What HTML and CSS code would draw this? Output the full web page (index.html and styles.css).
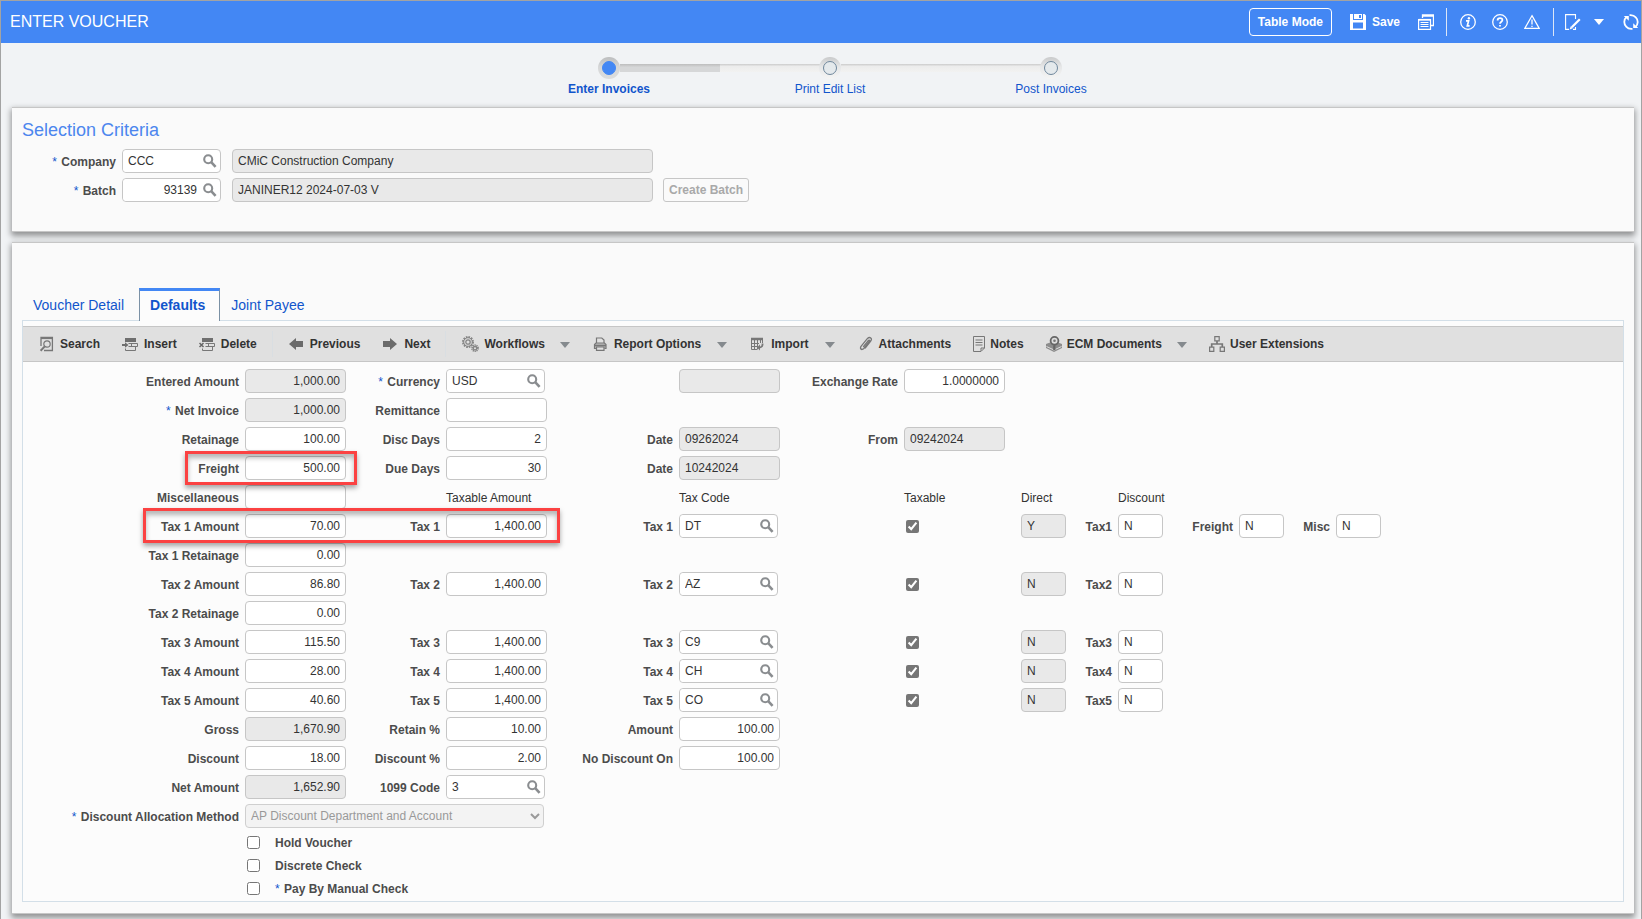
FILE: index.html
```html
<!DOCTYPE html>
<html lang="en">
<head>
<meta charset="utf-8">
<title>Enter Voucher</title>
<link rel="stylesheet" href="styles.css">
</head>
<body>
<svg class="defs" width="0" height="0" aria-hidden="true">
  <symbol id="mag" viewBox="0 0 14 14"><circle cx="5.2" cy="5.2" r="4" fill="none" stroke="#8a8d90" stroke-width="2.1"/><path d="M8.2 8.2L12.6 12.8" stroke="#8a8d90" stroke-width="2.6"/></symbol>
</svg>
<header class="topbar">
  <h1>ENTER VOUCHER</h1>
  <button class="mode">Table Mode</button>
  <button class="save"><svg width="16" height="16" viewBox="0 0 16 16"><path fill="#fff" fill-rule="evenodd" d="M0 0H3V6H13V0H14.5L16 1.5V16H0ZM3 8.5V14.5H13V8.5Z"/><path fill="#fff" d="M4 0H12V5H4Z"/><path fill="#4387f4" d="M9 1H11V4H9Z"/></svg>Save</button>
  <button class="pages" aria-label="Copy"><svg width="16" height="16" viewBox="0 0 16 16" fill="none" stroke="#fff"><path d="M4.5 4V1H15.5V11.5H13M4.5 2H15.5" stroke-width="1.3"/><path d="M.6 5.5H12.5V15.4H.6Z" stroke-width="1.2"/><path d="M.6 5.8H12.5" stroke-width="1.8"/><path d="M2.5 8.5H10.5M2.5 10.5H10.5M2.5 12.5H10.5"/></svg></button>
  <span class="bar"></span>
  <button aria-label="Info"><svg width="16" height="16" viewBox="0 0 16 16"><circle cx="8" cy="8" r="7.3" fill="none" stroke="#fff" stroke-width="1.3"/><path fill="none" stroke="#fff" stroke-width="1.7" d="M6 6.9H8.6L7.3 11.8H9.6"/><circle cx="8.9" cy="4.2" r="1.2" fill="#fff"/></svg></button>
  <button aria-label="Help"><svg width="16" height="16" viewBox="0 0 16 16" fill="none" stroke="#fff"><circle cx="8" cy="8" r="7.3" stroke-width="1.3"/><path stroke-width="1.8" d="M5.6 6.4C5.6 3.3 10.5 3.4 10.4 6.1C10.4 7.8 8.1 7.6 8 9.7M8 10.9V12.6"/></svg></button>
  <button class="warn" aria-label="Warnings"><svg width="16" height="16" viewBox="0 0 16 16" fill="none" stroke="#fff"><path stroke-width="1.2" d="M8 1.6L15.2 14.4H.8Z"/><path stroke-width="1.3" d="M8 5.5V10.6M8 11.7V13"/></svg></button>
  <span class="bar"></span>
  <button class="edit" aria-label="Edit"><svg width="16" height="16" viewBox="0 0 16 16" fill="none" stroke="#fff"><path d="M10.5 5V.6H.6V15.4H4" stroke-width="1.1"/><path d="M10.5 13V15.4H8" stroke-width="1.1"/><path d="M14.8 5.2L6.8 13.2" stroke-width="2.2"/><path fill="#fff" stroke="none" d="M5.8 12.2L7.8 14.2L4.6 15.6Z"/></svg></button>
  <button class="drop" aria-label="More"><svg width="10" height="6" viewBox="0 0 10 6"><path fill="#fff" d="M0 0H10L5 6Z"/></svg></button>
  <button aria-label="Refresh"><svg width="16" height="16" viewBox="0 0 16 16"><path fill="none" stroke="#fff" stroke-width="1.8" d="M3.6 2.900A6.700 6.700 0 0 0 3.200 12.600Q5.500 15.300 9.500 14.800M12.400 13.100A6.700 6.700 0 0 0 12.800 3.400Q10.500 .7 6.500 1.200"/><path fill="#fff" d="M.8 2H5.800V6.800ZM15.200 14H10.200V9.200Z"/></svg></button>
</header>

<nav class="train">
  <a href="#" class="step on"><span class="dot"></span>Enter Invoices</a>
  <a href="#" class="step"><span class="dot"></span>Print Edit List</a>
  <a href="#" class="step"><span class="dot"></span>Post Invoices</a>
</nav>

<section class="panel criteria">
  <h2>Selection Criteria</h2>
  <div class="crit">
    <label for="company"><i>*</i> Company</label>
    <span class="lookup"><input id="company" value="CCC"><button aria-label="Find company"><svg><use href="#mag"/></svg></button></span>
    <input class="wide" value="CMiC Construction Company" aria-label="Company name" disabled>
  </div>
  <div class="crit">
    <label for="batch"><i>*</i> Batch</label>
    <span class="lookup"><input id="batch" class="num" value="93139"><button aria-label="Find batch"><svg><use href="#mag"/></svg></button></span>
    <input class="wide" value="JANINER12 2024-07-03 V" aria-label="Batch name" disabled>
    <button class="create" disabled>Create Batch</button>
  </div>
</section>

<section class="panel detail">
  <nav class="tabs"><a href="#">Voucher Detail</a><a href="#" class="active">Defaults</a><a href="#">Joint Payee</a></nav>
  <div class="sheet">
    <div class="toolbar">
      <button><svg width="16" height="16" viewBox="0 0 16 16" fill="none" stroke="#777"><path d="M3 10V1.5H14.4V14.5H6" stroke-width="1.3"/><path d="M3 2.2H14.4" stroke-width="1.8"/><circle cx="9" cy="8" r="3.2" stroke-width="1.2"/><path d="M6.8 10.4L2.6 14.8" stroke-width="2"/></svg>Search</button>
      <button><svg width="16" height="16" viewBox="0 0 16 16"><path fill="#6f6f6f" d="M3 2H14V6H3ZM0 8H3V6.2L6.5 9L3 11.800V10H0Z"/><path fill="none" stroke="#777" d="M6.500 7.500H15.500V10.500H6.500M3.500 12.500V14.500H13.500V11M9.500 7.500V10.500"/></svg>Insert</button>
      <button><svg width="16" height="16" viewBox="0 0 16 16"><path fill="#6f6f6f" d="M3 2H14V6H3Z"/><path fill="none" stroke="#777" d="M6.500 7.500H15.500V10.500H6.500M3.500 12.500V14.500H13.500V11M9.500 7.500V10.500"/><path stroke="#666" stroke-width="1.500" d="M.5 7L4.500 11M4.500 7L.5 11"/></svg>Delete</button>
      <span class="rule"></span>
      <button><svg width="16" height="16" viewBox="0 0 16 16"><path fill="#6b6b6b" d="M1 8L8 2V5H15V11H8V14Z"/></svg>Previous</button>
      <button><svg width="16" height="16" viewBox="0 0 16 16"><path fill="#6b6b6b" d="M15 8L8 2V5H1V11H8V14Z"/></svg>Next</button>
      <span class="rule"></span>
      <button class="tight"><svg width="18" height="16" viewBox="0 0 18 16" fill="none" stroke="#858585"><circle cx="7" cy="6" r="5" stroke-width="2" stroke-dasharray="1.600 1"/><circle cx="7" cy="6" r="4.300"/><circle cx="7" cy="6" r="2.200" stroke-width="1.300"/><circle cx="14" cy="12.200" r="3" stroke-width="1.800" stroke-dasharray="1.200 .7"/><circle cx="14" cy="12.200" r="1.700" stroke-width="1.300"/></svg>Workflows<b class="caret"></b></button>
      <button><svg width="16" height="16" viewBox="0 0 16 16" fill="none" stroke="#777" stroke-width="1.200"><path d="M4.500 7V2H9.800L12 4V7"/><path fill="#bbb" d="M4 12.500H2.500V8.500L4 7H12.500L14 8.500V12.500H12.500"/><path stroke-width="1.500" d="M2.500 9.500H14"/><path fill="#e0e0e0" d="M4.500 11H12V14.400H4.500Z"/></svg>Report Options<b class="caret"></b></button>
      <button><svg width="16" height="16" viewBox="0 0 16 16" fill="none" stroke="#777"><path d="M8 13.500H2.500V2.500H13.500V7M2.500 7.500H10M2.500 10.500H8M5.500 4V13.500M8.500 4V13.500M11.500 4V7"/><path stroke-width="2.500" d="M2 3H14"/><path stroke-width="1.800" d="M13.500 7.500Q14 11.500 9.800 11.500"/><path fill="#777" stroke="none" d="M8 11.500L11 8.500V14.500Z"/></svg>Import<b class="caret"></b></button>
      <button><svg width="16" height="16" viewBox="0 0 16 16" fill="none" stroke="#777" stroke-width="1.300"><path d="M6.200 10.800L11.200 4.600Q12.300 3.600 12.700 4.800L6.800 12.500Q5 14.300 3.700 12.800Q3.100 11.700 4.200 10.200L10.500 2.400Q12.300 .8 14 2.200Q15 3.400 13.700 5.100L8 12.300"/></svg>Attachments</button>
      <button class="tight"><svg width="12" height="16" viewBox="0 0 12 16" fill="none" stroke="#777"><path d="M.5.5H11.500V12L8 15.500H.5ZM8 15V12H11.500M2.500 4H9.500M2.500 6.500H9.500M2.500 9H9.500"/></svg>Notes</button>
      <button class="tight"><svg width="16" height="16" viewBox="0 0 16 16"><path fill="#8c8c8c" d="M0 8L4 6.500L8 10L12 6.500L16 8V12L8 16L0 12Z"/><path stroke="#ddd" fill="none" d="M.5 10.500L8 14L15.500 10.500"/><circle cx="8.500" cy="4.800" r="3.900" fill="#ddd" stroke="#666" stroke-width="1.800"/><circle cx="8.500" cy="4.800" r="1.300" fill="#777"/><path stroke="#666" stroke-width="2.200" d="M8.300 9V14"/></svg>ECM Documents<b class="caret"></b></button>
      <button class="tight"><svg width="16" height="16" viewBox="0 0 16 16" fill="none" stroke="#777"><path stroke-width="1.200" d="M5.800.6H10.200V4.800H5.800ZM.6 11.200H4.800V15.400H.6ZM11.200 11.200H15.400V15.400H11.200Z"/><path stroke-width="1.700" d="M8 5V8M2.700 11V8H13.300V11"/></svg>User Extensions</button>
    </div>
    <form class="form">
      <div class="row">
        <label class="l1" for="a1">Entered Amount</label><input class="f1 num" id="a1" value="1,000.00" disabled>
        <label class="l2" for="b1"><i>*</i> Currency</label><span class="lookup f2"><input id="b1" value="USD"><button type="button" aria-label="Find"><svg><use href="#mag"/></svg></button></span>
        <input class="f3" aria-label="Currency name" disabled>
        <label class="l4" for="d1">Exchange Rate</label><input class="f4 num" id="d1" value="1.0000000">
      </div>
      <div class="row">
        <label class="l1" for="a2"><i>*</i> Net Invoice</label><input class="f1 num" id="a2" value="1,000.00" disabled>
        <label class="l2" for="b2">Remittance</label><input class="f2" id="b2">
      </div>
      <div class="row">
        <label class="l1" for="a3">Retainage</label><input class="f1 num" id="a3" value="100.00">
        <label class="l2" for="b3">Disc Days</label><input class="f2 num" id="b3" value="2">
        <label class="l3" for="c3">Date</label><input class="f3" id="c3" value="09262024" disabled>
        <label class="l4" for="d3">From</label><input class="f4" id="d3" value="09242024" disabled>
      </div>
      <div class="row">
        <label class="l1" for="a4">Freight</label><input class="f1 num" id="a4" value="500.00">
        <label class="l2" for="b4">Due Days</label><input class="f2 num" id="b4" value="30">
        <label class="l3" for="c4">Date</label><input class="f3" id="c4" value="10242024" disabled>
        <span class="mark mark-freight"></span>
      </div>
      <div class="row">
        <label class="l1" for="a5">Miscellaneous</label><input class="f1 num" id="a5">
        <span class="head f2">Taxable Amount</span><span class="head f3">Tax Code</span><span class="head f4">Taxable</span><span class="head f5">Direct</span><span class="head f6">Discount</span>
      </div>
      <div class="row">
        <label class="l1" for="a6">Tax 1 Amount</label><input class="f1 num" id="a6" value="70.00">
        <label class="l2" for="b6">Tax 1</label><input class="f2 num" id="b6" value="1,400.00">
        <label class="l3" for="c6">Tax 1</label><span class="lookup f3"><input id="c6" value="DT"><button type="button" aria-label="Find"><svg><use href="#mag"/></svg></button></span>
        <input type="checkbox" class="f4" aria-label="Tax 1 taxable" checked><input class="f5" aria-label="Tax 1 direct" value="Y" disabled>
        <label class="l6" for="f6">Tax1</label><input class="f6" id="f6" value="N">
        <label class="l7" for="g6">Freight</label><input class="f7" id="g6" value="N">
        <label class="l8" for="h6">Misc</label><input class="f8" id="h6" value="N">
        <span class="mark mark-tax"></span>
      </div>
      <div class="row"><label class="l1" for="a7">Tax 1 Retainage</label><input class="f1 num" id="a7" value="0.00"></div>
      <div class="row">
        <label class="l1" for="a8">Tax 2 Amount</label><input class="f1 num" id="a8" value="86.80">
        <label class="l2" for="b8">Tax 2</label><input class="f2 num" id="b8" value="1,400.00">
        <label class="l3" for="c8">Tax 2</label><span class="lookup f3"><input id="c8" value="AZ"><button type="button" aria-label="Find"><svg><use href="#mag"/></svg></button></span>
        <input type="checkbox" class="f4" aria-label="Tax 2 taxable" checked><input class="f5" aria-label="Tax 2 direct" value="N" disabled>
        <label class="l6" for="f8">Tax2</label><input class="f6" id="f8" value="N">
      </div>
      <div class="row"><label class="l1" for="a9">Tax 2 Retainage</label><input class="f1 num" id="a9" value="0.00"></div>
      <div class="row">
        <label class="l1" for="a10">Tax 3 Amount</label><input class="f1 num" id="a10" value="115.50">
        <label class="l2" for="b10">Tax 3</label><input class="f2 num" id="b10" value="1,400.00">
        <label class="l3" for="c10">Tax 3</label><span class="lookup f3"><input id="c10" value="C9"><button type="button" aria-label="Find"><svg><use href="#mag"/></svg></button></span>
        <input type="checkbox" class="f4" aria-label="Tax 3 taxable" checked><input class="f5" aria-label="Tax 3 direct" value="N" disabled>
        <label class="l6" for="f10">Tax3</label><input class="f6" id="f10" value="N">
      </div>
      <div class="row">
        <label class="l1" for="a11">Tax 4 Amount</label><input class="f1 num" id="a11" value="28.00">
        <label class="l2" for="b11">Tax 4</label><input class="f2 num" id="b11" value="1,400.00">
        <label class="l3" for="c11">Tax 4</label><span class="lookup f3"><input id="c11" value="CH"><button type="button" aria-label="Find"><svg><use href="#mag"/></svg></button></span>
        <input type="checkbox" class="f4" aria-label="Tax 4 taxable" checked><input class="f5" aria-label="Tax 4 direct" value="N" disabled>
        <label class="l6" for="f11">Tax4</label><input class="f6" id="f11" value="N">
      </div>
      <div class="row">
        <label class="l1" for="a12">Tax 5 Amount</label><input class="f1 num" id="a12" value="40.60">
        <label class="l2" for="b12">Tax 5</label><input class="f2 num" id="b12" value="1,400.00">
        <label class="l3" for="c12">Tax 5</label><span class="lookup f3"><input id="c12" value="CO"><button type="button" aria-label="Find"><svg><use href="#mag"/></svg></button></span>
        <input type="checkbox" class="f4" aria-label="Tax 5 taxable" checked><input class="f5" aria-label="Tax 5 direct" value="N" disabled>
        <label class="l6" for="f12">Tax5</label><input class="f6" id="f12" value="N">
      </div>
      <div class="row">
        <label class="l1" for="a13">Gross</label><input class="f1 num" id="a13" value="1,670.90" disabled>
        <label class="l2" for="b13">Retain %</label><input class="f2 num" id="b13" value="10.00">
        <label class="l3" for="c13">Amount</label><input class="f3 num" id="c13" value="100.00">
      </div>
      <div class="row">
        <label class="l1" for="a14">Discount</label><input class="f1 num" id="a14" value="18.00">
        <label class="l2" for="b14">Discount %</label><input class="f2 num" id="b14" value="2.00">
        <label class="l3" for="c14">No Discount On</label><input class="f3 num" id="c14" value="100.00">
      </div>
      <div class="row">
        <label class="l1" for="a15">Net Amount</label><input class="f1 num" id="a15" value="1,652.90" disabled>
        <label class="l2" for="b15">1099 Code</label><span class="lookup f2"><input id="b15" value="3"><button type="button" aria-label="Find"><svg><use href="#mag"/></svg></button></span>
      </div>
      <div class="row">
        <label class="l1" for="a16"><i>*</i> Discount Allocation Method</label>
        <select class="method" id="a16" disabled><option>AP Discount Department and Account</option></select>
      </div>
      <div class="checks">
        <label><input type="checkbox"><span>Hold Voucher</span></label>
        <label><input type="checkbox"><span>Discrete Check</span></label>
        <label><input type="checkbox"><span><i>*</i> Pay By Manual Check</span></label>
      </div>
    </form>
  </div>
</section>
</body>
</html>
```

FILE: styles.css
```css
*, *::before, *::after { box-sizing: border-box; }
body {
  margin: 0;
  min-height: 100vh;
  border: 1px solid #a3a3a3;
  background: #f1f3f5;
  font: 12px "Liberation Sans", Arial, sans-serif;
  color: #333;
}
button, input, select { font: inherit; color: inherit; margin: 0; }
button { border: 0; padding: 0; background: none; display: flex; align-items: center; white-space: nowrap; }
a { text-decoration: none; color: #1155cc; }
i { font-style: normal; font-weight: 400; color: #1155cc; margin-right: 1px; }
svg { flex: none; display: block; }
.defs { position: absolute; }

.topbar {
  display: flex;
  align-items: center;
  gap: 16px;
  height: 42px;
  margin-right: -1px;
  padding: 0 3px 0 9px;
  background: #4387f4;
  color: #fff;
}
.topbar h1 { margin: 0 auto 1px 0; font-size: 16px; font-weight: 400; line-height: 20px; }
.mode { height: 28px; padding: 0 8px; border: 1px solid #fff; border-radius: 4px; font-weight: 700; }
.save { gap: 6px; font-weight: 700; margin: 0 2px; }
.pages { margin-right: -4px; }
.bar { width: 1px; height: 28px; background: #dce6f7; margin-right: -3px; }
.warn { margin-right: -3px; }
.edit { margin: 0 -3px 0 -2px; }
.drop { margin-right: 3px; }

.train { display: flex; justify-content: center; height: 64px; padding: 14px 0 0 18px; }
.step {
  width: 221px;
  display: flex;
  flex-direction: column;
  align-items: center;
  gap: 3px;
  line-height: 14px;
  position: relative;
}
.step.on { font-weight: 700; }
.dot {
  width: 22px;
  height: 22px;
  padding: 4px;
  border-radius: 50%;
  background: linear-gradient(#c9cacb, #e6e7e8 45%, #f5f5f4);
}
.dot::before {
  content: "";
  display: block;
  height: 14px;
  border: 1px solid #6f879c;
  border-radius: 50%;
  background: #e4e9ec;
}
.on .dot { background: linear-gradient(#bcbdbe, #d6d7d8 45%, #dcdddd); }
.on .dot::before { border-color: #4387f4; background: #4387f4; }
/* connector to the next step */
.step:not(:last-child)::before {
  content: "";
  position: absolute;
  left: 121px;
  top: 7px;
  width: 200px;
  height: 8px;
  background: linear-gradient(#cbcbcb, #ececec 30%, #f2f2f1);
}
.step.on::after {
  content: "";
  position: absolute;
  left: 121px;
  top: 7px;
  width: 100px;
  height: 8px;
  background: linear-gradient(#bdbdbd, #d6d7d8 40%);
}

.panel {
  margin: 0 7px 10px 11px;
  border: 1px solid #c6c6c6;
  border-width: 1px 0;
  background: #fafafa;
  box-shadow: 0 3px 6px 1px rgba(0, 0, 0, .4);
}
.criteria { padding: 12px 0 29px; }
h2 { margin: 0 0 9px 10px; font-size: 18px; font-weight: 400; line-height: 20px; color: #4c86ee; }
.crit { display: flex; height: 24px; }
.crit + .crit { margin-top: 5px; }
.crit label { width: 104px; margin-right: 6px; }
.crit .wide { width: 421px; margin: 0 10px 0 11px; }
.create { padding: 0 5px; border: 1px solid #c6c6c6; border-radius: 3px; font-weight: 700; color: #a9a9a9; }

label { font-weight: 700; color: #4c4c4c; text-align: right; line-height: 14px; padding-top: 6px; white-space: nowrap; }
input:not([type]), .lookup {
  height: 24px;
  min-width: 0;
  border: 1px solid #c6c6c6;
  border-radius: 4px;
  background: #fff;
  padding: 0 5px 1px;
}
input:disabled { background: #e9e9e9; }
.num { text-align: right; }
.lookup { width: 99px; display: flex; padding: 0; }
.lookup input:not([type]) { flex: 1; height: 22px; width: 0; border: 0; }
.lookup button { width: 18px; padding-left: 1px; }
.lookup svg { width: 14px; height: 14px; }

.detail { margin-bottom: 5px; padding: 45px 10px 11px 10px; }
.tabs { display: flex; height: 33px; margin-bottom: -1px; position: relative; font-size: 14px; line-height: 16px; }
.tabs a { padding: 9px 11px 0; border-top: 0; }
.tabs a:first-child { padding-right: 15px; }
.tabs .active {
  padding: 6px 14px 0 10px;
  border: 1px solid #7b91a5;
  border-top: 3px solid #4387f4;
  border-bottom: 0;
  background: #fcfcfc;
  font-weight: 700;
}
.sheet { border: 1px solid #d3dfe8; background: #fcfcfc; padding-top: 5px; }
.toolbar {
  display: flex;
  align-items: center;
  gap: 22px;
  height: 36px;
  padding-left: 15px;
  border: 1px solid #c6c6c6;
  border-width: 1px 0;
  background: #e0e0e0;
}
.toolbar button { gap: 6px; font-weight: 700; line-height: 14px; }
.toolbar .tight { gap: 5px; }
.rule { width: 1px; height: 26px; margin: 0 -7px; background: #d9dee2; }
.caret { margin: 2px 0 0 10px; border: 5px solid transparent; border-top: 6px solid #858a8e; border-bottom: 0; }

.form { padding: 7px 0 1px; }
.row {
  display: grid;
  grid-template-columns: 216px 101px 88px 101px 120px 101px 112px 101px 4px 45px 40px 45px 64px 45px 40px 45px;
  grid-template-rows: 24px;
  column-gap: 6px;
  margin-bottom: 5px;
  position: relative;
}
.row > * { grid-row: 1; }
.l1 { grid-column: 1; }
.f1 { grid-column: 2; }
.l2 { grid-column: 3; }
.f2 { grid-column: 4; }
.l3 { grid-column: 5; }
.f3 { grid-column: 6; }
.l4 { grid-column: 7; }
.f4 { grid-column: 8; }
.f5 { grid-column: 10; }
.l6 { grid-column: 11; }
.f6 { grid-column: 12; }
.l7 { grid-column: 13; }
.f7 { grid-column: 14; }
.l8 { grid-column: 15; }
.f8 { grid-column: 16; }
.head { line-height: 14px; padding-top: 6px; white-space: nowrap; }
input[type="checkbox"] { width: 13px; height: 13px; margin: 0 0 0 2px; align-self: center; accent-color: #767676; }
.method {
  grid-column: 2 / 5;
  width: 299px;
  border: 1px solid #cfcfcf;
  border-radius: 4px;
  background: #f3f3f3;
  color: #999;
  opacity: 1;
  padding: 0 0 1px 1px;
}
.checks { display: flex; flex-direction: column; margin: -2px 0 0 222px; }
.checks label { display: flex; align-items: center; gap: 15px; height: 23px; padding: 0; }

/* callout frames drawn over the fields */
.mark {
  position: absolute;
  z-index: 1;
  border: 3px solid #fb4242;
  box-shadow: 0 3px 5px rgba(0, 0, 0, .35), inset 0 4px 5px rgba(0, 0, 0, .28);
  pointer-events: none;
}
.mark-freight { left: 162px; top: -5px; width: 172px; height: 34px; }
.mark-tax { left: 120px; top: -6px; width: 417px; height: 35px; }
```
